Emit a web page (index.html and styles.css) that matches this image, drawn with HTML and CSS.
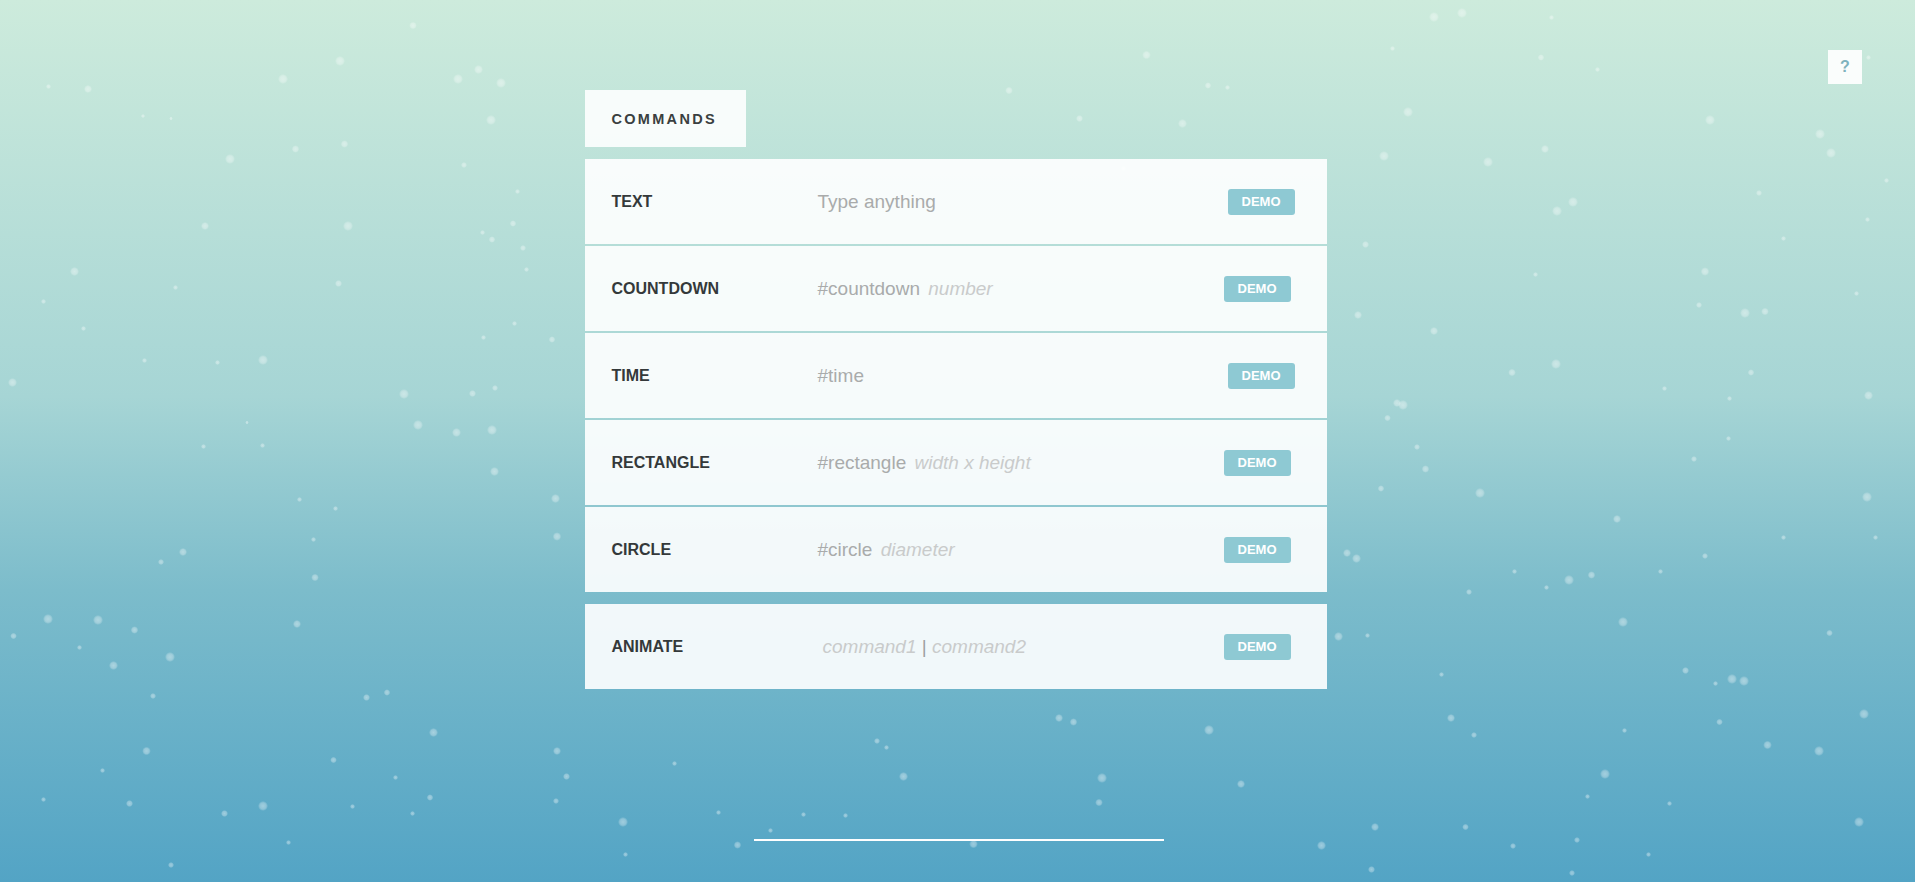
FILE: index.html
```html
<!DOCTYPE html>
<html lang="en">
<head>
<meta charset="utf-8">
<title>Commands</title>
<link rel="stylesheet" href="styles.css">
</head>
<body>
<div class="page">
  <div class="snow" id="snow"></div>
  <a class="help" href="#">?</a>
  <main class="content">
    <div class="tab">COMMANDS</div>
    <div class="list">
      <div class="row">
        <div class="label">TEXT</div>
        <div class="desc">Type anything</div>
        <span class="demo demo--wide">DEMO</span>
      </div>
      <div class="row">
        <div class="label">COUNTDOWN</div>
        <div class="desc">#countdown <em class="arg">number</em></div>
        <span class="demo">DEMO</span>
      </div>
      <div class="row">
        <div class="label">TIME</div>
        <div class="desc">#time</div>
        <span class="demo demo--wide">DEMO</span>
      </div>
      <div class="row">
        <div class="label">RECTANGLE</div>
        <div class="desc">#rectangle <em class="arg">width x height</em></div>
        <span class="demo">DEMO</span>
      </div>
      <div class="row">
        <div class="label">CIRCLE</div>
        <div class="desc">#circle <em class="arg">diameter</em></div>
        <span class="demo">DEMO</span>
      </div>
    </div>
    <div class="row row--single">
      <div class="label">ANIMATE</div>
      <div class="desc desc--indent"><em class="arg">command1</em> <span class="pipe">|</span> <em class="arg">command2</em></div>
      <span class="demo">DEMO</span>
    </div>
    <div class="rule"></div>
  </main>
</div>
<script src="snow.js"></script>
</body>
</html>
```

FILE: styles.css
```css
html, body {
  margin: 0;
  padding: 0;
  height: 100%;
}

body {
  font-family: "Liberation Sans", Arial, sans-serif;
  background: linear-gradient(to bottom, #cdebdc 0%, #a6d5d5 45%, #7cbccb 67%, #53a4c5 100%);
  overflow: hidden;
}

.page {
  position: relative;
  min-height: 100vh;
}

.snow {
  position: absolute;
  inset: 0;
  pointer-events: none;
  overflow: hidden;
}

.flake {
  position: absolute;
  border-radius: 50%;
  background: radial-gradient(circle, rgba(255,255,255,0.42) 0%, rgba(255,255,255,0.3) 45%, rgba(255,255,255,0) 72%);
}

.help {
  position: absolute;
  top: 50px;
  right: 53px;
  width: 34px;
  height: 34px;
  display: flex;
  align-items: center;
  justify-content: center;
  background: #fafdfc;
  color: #7fb2bd;
  font-weight: bold;
  font-size: 16px;
  text-decoration: none;
}

.content {
  position: relative;
  width: 742px;
  margin-left: calc(50% - 373px);
  padding-top: 90px;
  display: flex;
  flex-direction: column;
}

.tab {
  align-self: flex-start;
  width: 161px;
  height: 57px;
  box-sizing: border-box;
  padding-left: 27px;
  display: flex;
  align-items: center;
  background: rgba(255, 255, 255, 0.88);
  color: #3a3f40;
  font-weight: bold;
  font-size: 14.5px;
  letter-spacing: 2.3px;
  margin-bottom: 12px;
}

.list {
  display: flex;
  flex-direction: column;
  gap: 2px;
}

.row {
  height: 85px;
  display: grid;
  grid-template-columns: 206px 1fr auto;
  align-items: center;
  padding: 0 36px 0 27px;
  background: rgba(255, 255, 255, 0.9);
}

.row--single {
  margin-top: 12px;
}

.label {
  font-weight: bold;
  font-size: 16px;
  color: #34393a;
}

.desc {
  font-size: 19px;
  color: #a9abab;
}

.desc--indent {
  padding-left: 5px;
}

.arg {
  font-style: italic;
  color: #c9cbcb;
  margin-left: 3px;
}

.desc--indent .arg {
  margin-left: 0;
}

.pipe {
  color: #9ea0a0;
}

.demo {
  display: inline-flex;
  align-items: center;
  justify-content: center;
  width: 67px;
  height: 26px;
  border-radius: 3px;
  background: #8ec9d3;
  color: #ffffff;
  font-weight: bold;
  font-size: 13px;
}

.demo--wide {
  margin-right: -4px;
}

.rule {
  align-self: flex-start;
  width: 410px;
  height: 2px;
  background: #ffffff;
  margin-top: 150px;
  margin-left: 169px;
}
```

FILE: snow.js
```js
(function () {
  var k = 1915 / 1568;
  // [x, y, size] in reference (shrunk) coordinates; size in px
  var flakes = [
    [232,65,8],[278,50,8],[375,65,8],[392,57,7],[410,68,8],[402,98,8],[188,130,8],[242,122,6],
    [285,185,8],[277,232,6],[168,185,6],[61,222,7],[10,313,7],[215,295,8],[331,323,8],[387,322,6],
    [405,318,5],[342,348,8],[374,354,7],[403,352,8],[405,386,7],[455,408,7],[456,439,7],[39,507,8],
    [80,508,8],[93,545,7],[139,538,8],[125,570,5],[300,571,6],[317,567,5],[355,600,7],[456,615,7],
    [464,636,6],[215,660,8],[184,666,6],[120,615,7],[110,516,6],[258,473,6],[243,511,6],[510,673,8],
    [604,692,6],[797,691,7],[902,637,8],[900,657,6],[867,588,6],[879,591,6],[990,598,8],[1016,642,6],
    [1082,692,7],[1123,712,6],[1126,677,6],[1200,677,5],[1239,693,5],[1291,688,5],[1314,634,8],[1329,509,8],
    [1285,475,8],[1303,471,6],[1324,425,7],[1396,455,5],[1418,556,8],[1428,558,8],[1447,610,7],[1489,615,8],
    [1526,585,8],[1522,673,8],[1529,407,8],[1530,324,7],[1434,305,5],[1429,256,8],[1445,255,6],[1391,250,5],
    [1396,222,7],[1288,165,8],[1275,173,8],[1265,122,6],[1218,133,8],[1153,92,8],[1133,128,8],[1174,14,8],
    [1197,11,8],[1262,47,5],[1308,57,4],[1400,98,8],[1490,110,8],[1499,125,8],[1440,158,5],[1529,180,4],
    [826,74,6],[884,97,6],[968,101,7],[939,45,7],[989,70,5],[1174,271,6],[1149,332,8],[1144,330,6],
    [1212,404,8],[1167,384,6],[1160,366,5],[1136,342,5],[1118,200,6],[1112,258,7],[1131,400,5],[1103,453,6],
    [1111,457,7],[1096,521,7],[1238,305,6],[1274,298,8],[1257,225,4],[1363,318,4],[1387,376,5],[1415,359,4],
    [1416,326,4],[1498,518,5],[1380,549,5],[1360,468,4],[1240,468,4],[1266,481,4],[1203,485,5],[1188,588,6],
    [1207,602,5],[1180,552,4],[1408,591,5],[1300,652,4],[1367,658,4],[1350,700,4],[1287,715,5],[718,607,5],
    [740,636,7],[726,612,4],[692,668,4],[658,667,4],[631,680,4],[588,665,4],[552,625,4],[512,700,4],
    [455,656,5],[352,653,5],[338,666,4],[324,637,4],[273,622,5],[289,660,4],[236,690,4],[140,708,5],
    [106,658,5],[84,631,4],[36,655,4],[11,521,5],[65,530,4],[150,452,6],[132,460,5],[257,442,4],
    [275,416,4],[245,409,4],[215,365,4],[202,346,3],[167,366,4],[118,295,4],[68,269,4],[36,247,4],
    [144,235,4],[178,297,4],[428,203,5],[420,183,5],[431,221,4],[380,135,5],[282,118,6],[424,157,4],
    [403,196,5],[395,190,4],[396,276,4],[452,278,5],[421,265,4],[338,21,6],[72,73,6],[40,71,4],
    [117,95,3],[140,97,3],[1270,14,4],[1140,40,4],[1530,47,4],[1545,148,4],[1005,72,4],[920,138,4],
    [1120,520,4],[1460,195,4],[1520,240,4],[1460,440,4],[1536,440,4],[1330,598,4],[1405,560,4]
  ];
  var layer = document.getElementById('snow');
  flakes.forEach(function (f) {
    var d = document.createElement('div');
    var s = f[2] * 1.25;
    d.className = 'flake';
    d.style.width = s + 'px';
    d.style.height = s + 'px';
    d.style.left = (f[0] * k - s / 2) + 'px';
    d.style.top = (f[1] * k - s / 2) + 'px';
    layer.appendChild(d);
  });
})();
```
